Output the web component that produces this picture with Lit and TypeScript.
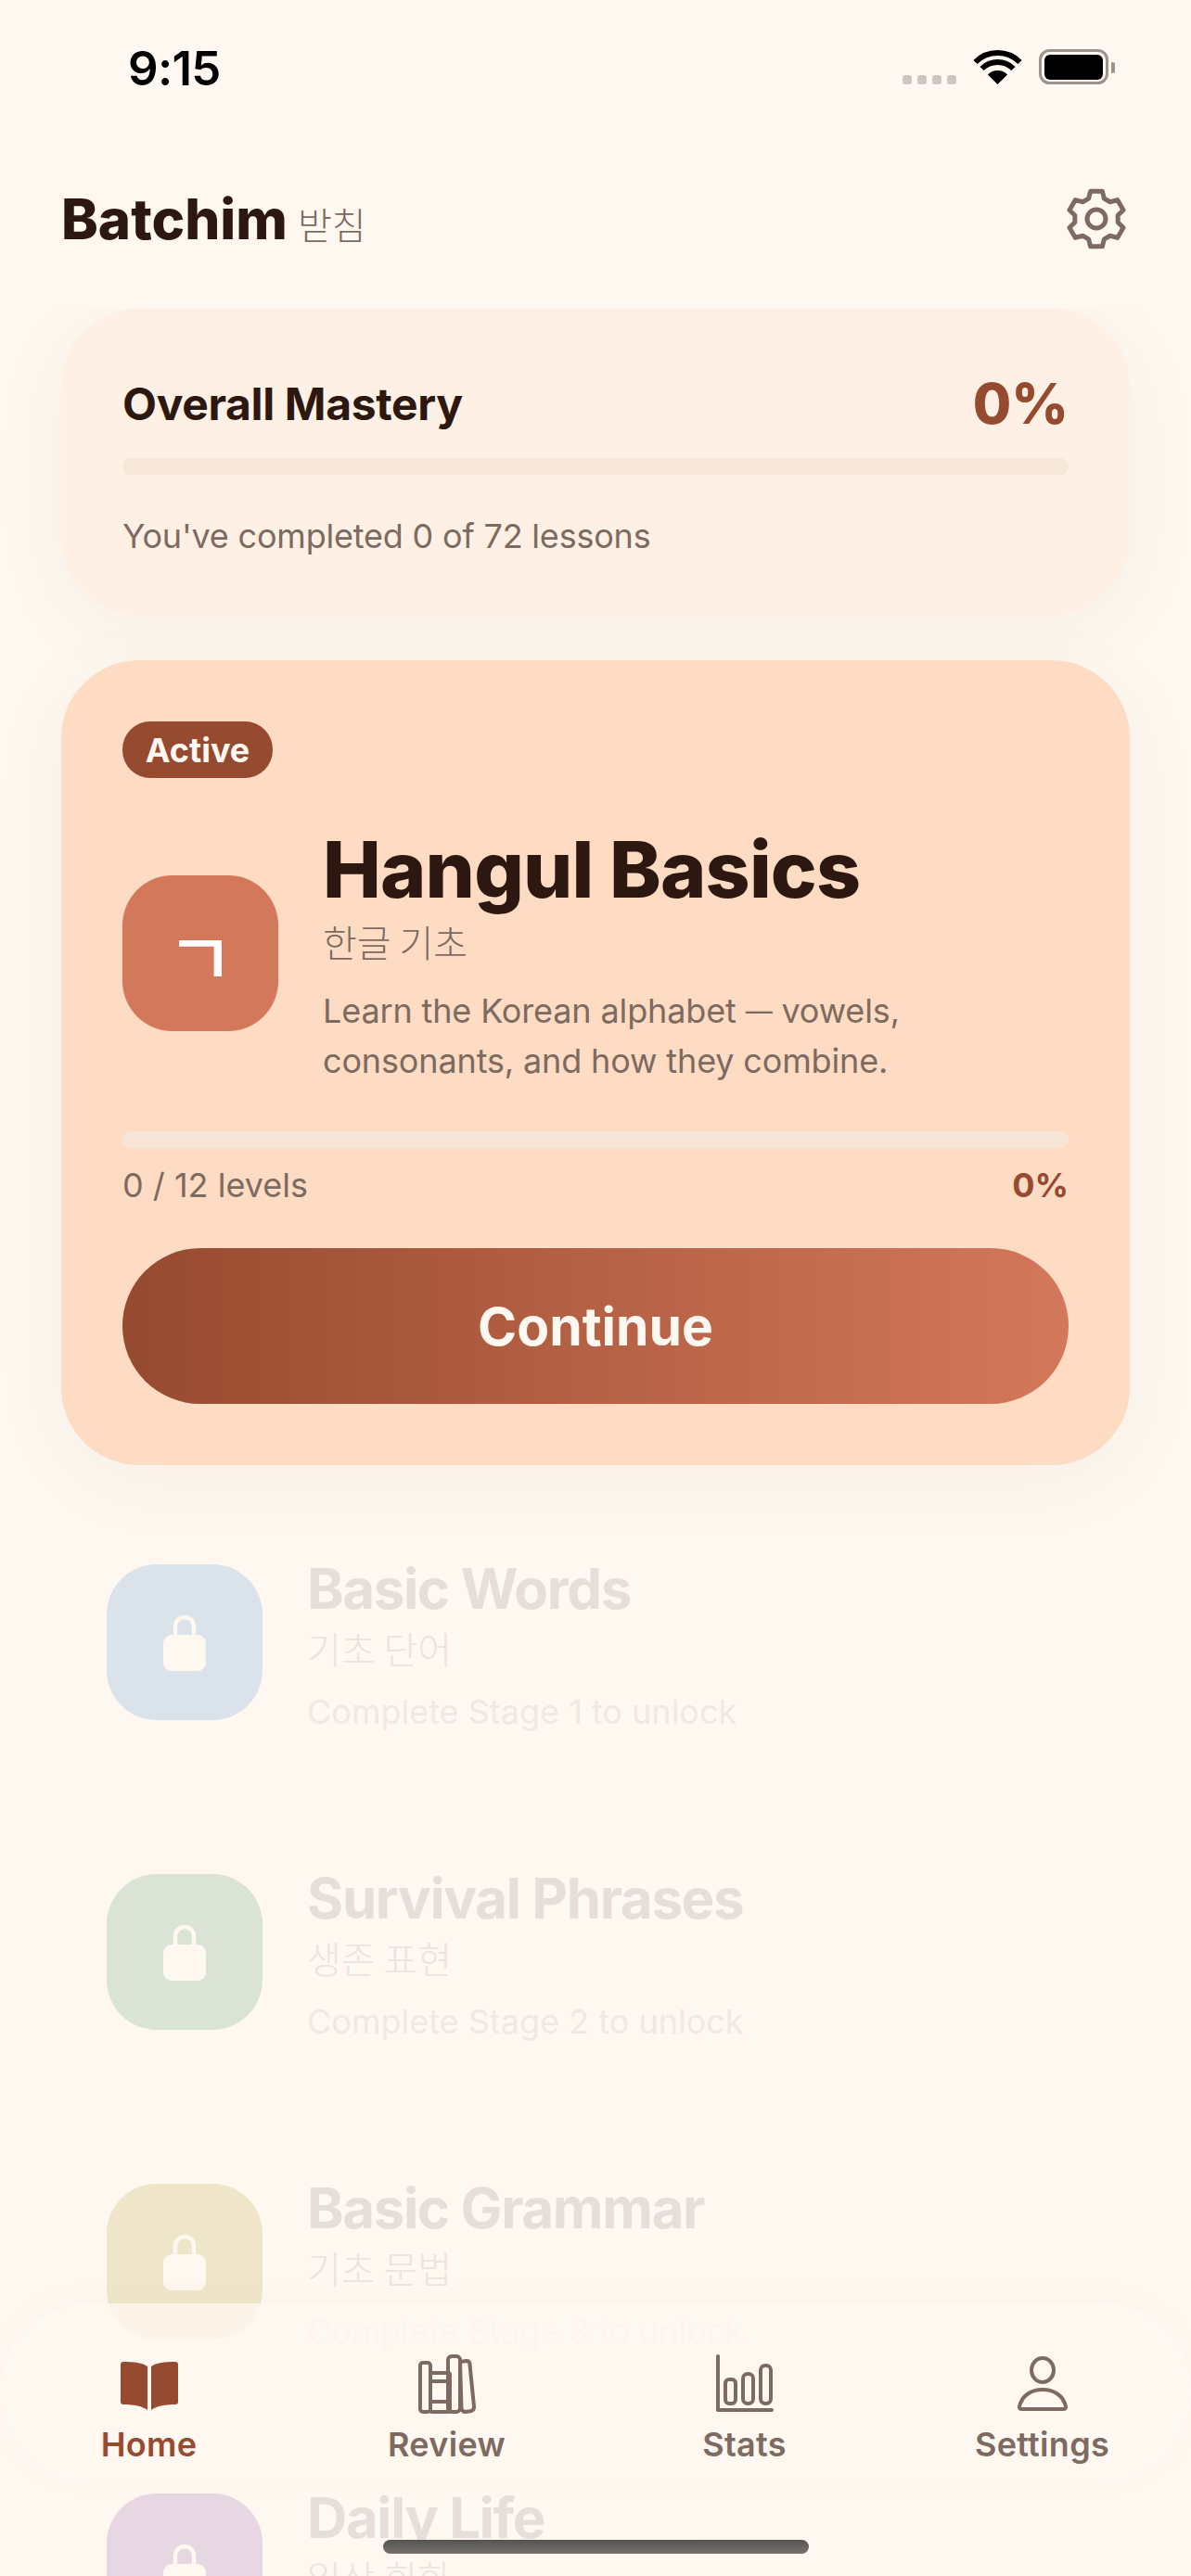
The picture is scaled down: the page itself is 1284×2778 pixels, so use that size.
import { LitElement, html, css } from "lit";
import { customElement } from "lit/decorators.js";

function gearPath(cx: number, cy: number, rO: number, rI: number): string {
  const pts: string[] = [];
  const p = (r: number, a: number) => {
    const t = (a * Math.PI) / 180;
    return `${(cx + r * Math.cos(t)).toFixed(2)} ${(cy + r * Math.sin(t)).toFixed(2)}`;
  };
  for (let i = 0; i < 6; i++) {
    const a = -90 + i * 60;
    pts.push(`${i === 0 ? "M" : "L"}${p(rI, a - 21)}`);
    pts.push(`L${p(rO, a - 12)}`);
    pts.push(`L${p(rO, a + 12)}`);
    pts.push(`L${p(rI, a + 21)}`);
  }
  return pts.join(" ") + " Z";
}

const lockIcon = html`<svg class="lock" viewBox="0 0 46 62" width="46" height="62">
  <path class="shackle" d="M13 26V14a10 10 0 0 1 20 0V26"></path>
  <rect class="lockbody" x="0" y="23" width="46" height="39" rx="9"></rect>
</svg>`;

const locked = [
  { t: "Basic Words", k: "기초 단어", h: "Complete Stage 1 to unlock", c: "blue" },
  { t: "Survival Phrases", k: "생존 표현", h: "Complete Stage 2 to unlock", c: "green" },
  { t: "Basic Grammar", k: "기초 문법", h: "Complete Stage 3 to unlock", c: "yellow" },
  { t: "Daily Life", k: "일상 회화", h: "Complete Stage 4 to unlock", c: "purple" },
];

@customElement("app-root")
export class AppRoot extends LitElement {
  static styles = css`
    :host {
      display: block;
      position: relative;
      width: 1284px;
      height: 2778px;
      overflow: hidden;
      background: #fff8f1;
      font-family: Inter, "Noto Sans CJK KR", sans-serif;
      color: #2c1810;
    }
    .page { display: flex; flex-direction: column; height: 2778px; }
    .status {
      height: 132px;
      flex: none;
      display: flex;
      align-items: flex-start;
      justify-content: space-between;
      padding: 43px 82px 0 138px;
      box-sizing: border-box;
    }
    .time { font-size: 51px; font-weight: 600; line-height: 62px; color: #000; letter-spacing: -0.7px; }
    .sysicons { display: block; margin-top: 10px; }
    .header {
      flex: none;
      height: 201px;
      display: flex;
      align-items: center;
      justify-content: space-between;
      padding: 6px 70px 0 66px;
      box-sizing: border-box;
    }
    .brand { display: flex; align-items: baseline; gap: 11px; }
    .brand b { font-size: 60px; font-weight: 800; letter-spacing: 0; line-height: 72px; }
    .brand span { font-size: 40px; color: #7d6a60; font-weight: 300; font-family: "Noto Sans CJK KR", sans-serif; }
    .gear { display: block; }
    .scroll {
      flex: 1;
      min-height: 0;
      overflow: hidden;
      padding: 0 66px;
      display: flex;
      flex-direction: column;
      gap: 49px;
    }
    .mastery {
      flex: none;
      height: 330px;
      box-sizing: border-box;
      padding: 66px;
      border-radius: 84px;
      background: #fef0e4;
      box-shadow: 0 16px 96px rgba(44, 24, 16, 0.04);
    }
    .m-top { display: flex; justify-content: space-between; align-items: center; height: 62px; margin-top: 5px; }
    .m-title { font-size: 48px; font-weight: 700; letter-spacing: -0.35px; }
    .m-pct { font-size: 60px; font-weight: 800; color: #964a2f; }
    .bar { height: 18px; border-radius: 9px; background: #f6e7d9; }
    .m-top + .bar { margin-top: 28px; }
    .m-sub { font-size: 36px; line-height: 54px; color: #7d6a60; margin-top: 39px; letter-spacing: -0.2px; }
    .active {
      flex: none;
      height: 868px;
      box-sizing: border-box;
      padding: 66px;
      border-radius: 84px;
      background: #fedcc3;
      box-shadow: 0 16px 96px rgba(44, 24, 16, 0.04);
    }
    .pill {
      display: inline-flex;
      align-items: center;
      justify-content: center;
      width: 162px;
      height: 61px;
      border-radius: 30px;
      background: #964a2f;
      color: #fff8f1;
      font-size: 36px;
      font-weight: 700;
      vertical-align: top;
    }
    .a-row { display: flex; align-items: center; gap: 48px; margin-top: 45px; }
    .a-icon {
      width: 168px;
      height: 168px;
      flex: none;
      border-radius: 54px;
      background: #d4785b;
      color: #fff;
      font-size: 80px;
      font-weight: 500;
      display: flex;
      align-items: center;
      justify-content: center;
      font-family: "Noto Sans CJK KR", sans-serif;
    }
    .a-title { font-size: 84px; font-weight: 800; line-height: 108px; letter-spacing: -0.84px; }
    .a-kr { font-size: 40px; font-weight: 300; line-height: 56px; color: #7d6a60; margin-top: -5px; font-family: "Noto Sans CJK KR", sans-serif; }
    .a-desc { font-size: 36px; line-height: 54px; color: #7d6a60; margin: 20px 0 1px; letter-spacing: -0.14px; }
    .dash { font-size: 29px; line-height: 0; vertical-align: 2.5px; }
    .a-row + .bar { margin-top: 48px; background: #f7e6d8; }
    .a-meta { display: flex; justify-content: space-between; align-items: center; height: 54px; margin-top: 13px; font-size: 36px; color: #7d6a60; }
    .a-meta b { color: #964a2f; font-weight: 700; }
    .cta {
      height: 168px;
      margin-top: 41px;
      border-radius: 84px;
      background: linear-gradient(90deg, #964a2f, #d4785b);
      color: #fff8f1;
      font-size: 57px;
      font-weight: 700;
      display: flex;
      align-items: center;
      justify-content: center;
    }
    .rows { display: flex; flex-direction: column; gap: 48px; flex: none; margin-top: -1px; }
    .row {
      flex: none;
      height: 286px;
      box-sizing: border-box;
      padding: 48px 49px;
      display: flex;
      align-items: center;
      gap: 48px;
    }
    .l-icon { width: 168px; height: 168px; flex: none; border-radius: 54px; display: flex; align-items: center; justify-content: center; }
    .l-text { padding-top: 5px; }
    .blue { background: #dbe3ea; }
    .green { background: #d9e4d6; }
    .yellow { background: #efe5c9; }
    .purple { background: #e7d7e2; }
    .shackle { fill: none; stroke: #fff8f1; stroke-width: 4.5; }
    .lockbody { fill: #fff8f1; }
    .lock { display: block; }
    .l-title { font-size: 60px; line-height: 72px; font-weight: 700; letter-spacing: -1.4px; color: #e6deda; }
    .l-kr { font-size: 40px; font-weight: 300; line-height: 56px; color: #ebe3de; font-family: "Noto Sans CJK KR", sans-serif; }
    .l-hint { font-size: 36px; line-height: 54px; color: #efe8e3; margin-top: 14px; margin-bottom: -2px; }
    .tabbar {
      position: absolute;
      left: 0;
      right: 0;
      top: 2484px;
      height: 192px;
      box-sizing: border-box;
      border-radius: 96px;
      background: rgba(255, 248, 241, 0.8);
      box-shadow: 0 -4px 48px rgba(44, 24, 16, 0.02);
      display: grid;
      grid-template-columns: repeat(4, 1fr);
      align-items: start;
    }
    .tab { display: flex; flex-direction: column; align-items: center; padding-top: 55px; color: #7d6a60; }
    .tab.on { color: #964a2f; }
    .tab svg { display: block; height: 66px; }
    .tab span { font-size: 36px; font-weight: 600; line-height: 44px; margin-top: 9px; letter-spacing: 0.3px; }
    .ln { fill: none; stroke: #7d6a60; stroke-width: 4; stroke-linejoin: round; stroke-linecap: round; }
    .home-ind {
      position: absolute;
      left: 413px;
      top: 2739px;
      width: 459px;
      height: 15px;
      border-radius: 8px;
      background: linear-gradient(180deg, #555350, #77736e);
    }
  `;

  render() {
    return html`<div class="page">
        <div class="status">
          <div class="time">9:15</div>
          <svg class="sysicons" width="229" height="38" viewBox="973 53 229 38">
            <g fill="#cbc6c0">
              <rect x="973" y="81" width="10" height="10" rx="3"></rect>
              <rect x="989" y="81" width="10" height="10" rx="3"></rect>
              <rect x="1005" y="81" width="10" height="10" rx="3"></rect>
              <rect x="1021" y="81" width="10" height="10" rx="3"></rect>
            </g>
            <path d="M1064.9 80.4 L1075.5 91 L1086.1 80.4 A15 15 0 0 0 1064.9 80.4 Z" fill="#000"></path>
            <path d="M1058.5 74 A24 24 0 0 1 1092.5 74" fill="none" stroke="#000" stroke-width="6"></path>
            <path d="M1051.5 67 A34 34 0 0 1 1099.5 67" fill="none" stroke="#000" stroke-width="6"></path>
            <rect x="1121.5" y="54.5" width="72" height="35" rx="10" fill="none" stroke="#9b938d" stroke-width="3"></rect>
            <rect x="1126" y="59" width="63" height="27" rx="6" fill="#000"></rect>
            <path d="M1198 67 A7 6 0 0 1 1198 79 Z" fill="#9b938d"></path>
          </svg>
        </div>
        <div class="header">
          <div class="brand"><b>Batchim</b><span>받침</span></div>
          <svg class="gear" width="64" height="66" viewBox="0 0 64 66">
            <path d="${gearPath(32, 33, 30.5, 23.5)}" fill="none" stroke="#7d6a60" stroke-width="5" stroke-linejoin="round"></path>
            <circle cx="32" cy="33" r="10" fill="none" stroke="#7d6a60" stroke-width="5"></circle>
          </svg>
        </div>
        <div class="scroll">
          <section class="mastery">
            <div class="m-top"><div class="m-title">Overall Mastery</div><div class="m-pct">0%</div></div>
            <div class="bar"></div>
            <div class="m-sub">You've completed 0 of 72 lessons</div>
          </section>
          <section class="active">
            <div class="pill">Active</div>
            <div class="a-row">
              <div class="a-icon">ㄱ</div>
              <div>
                <div class="a-title">Hangul Basics</div>
                <div class="a-kr">한글 기초</div>
                <div class="a-desc">Learn the Korean alphabet <span class="dash">—</span> vowels,<br />consonants, and how they combine.</div>
              </div>
            </div>
            <div class="bar"></div>
            <div class="a-meta"><span>0 / 12 levels</span><b>0%</b></div>
            <div class="cta">Continue</div>
          </section>
          <div class="rows">
            ${locked.map(
              (r) => html`<div class="row">
                <div class="l-icon ${r.c}">${lockIcon}</div>
                <div class="l-text">
                  <div class="l-title">${r.t}</div>
                  <div class="l-kr">${r.k}</div>
                  <div class="l-hint">${r.h}</div>
                </div>
              </div>`
            )}
          </div>
        </div>
      </div>
      <nav class="tabbar">
        <div class="tab on">
          <svg width="62" height="66" viewBox="0 0 62 66">
            <path fill="#964a2f" d="M29 13 C24 9 14 8 3 8 Q0 8 0 11 V51 Q0 54 3 54 C14 54 24 56 29 60 Z"></path>
            <path fill="#964a2f" d="M33 13 C38 9 48 8 59 8 Q62 8 62 11 V51 Q62 54 59 54 C48 54 38 56 33 60 Z"></path>
          </svg>
          <span>Home</span>
        </div>
        <div class="tab">
          <svg width="62" height="66" viewBox="0 0 62 66">
            <rect class="ln" x="2" y="9" width="11" height="53" rx="3"></rect>
            <rect class="ln" x="13" y="20" width="21" height="42" rx="2"></rect>
            <path class="ln" d="M13 29H34M13 51H34"></path>
            <rect class="ln" x="32" y="2" width="13" height="60" rx="4"></rect>
            <path class="ln" d="M45 8 L52 7 Q55 7 55.4 10 L60 56 Q60.4 60 57 61 L51 62 Q47 62 46.5 58 Z"></path>
          </svg>
          <span>Review</span>
        </div>
        <div class="tab">
          <svg width="62" height="66" viewBox="0 0 62 66">
            <path class="ln" d="M2 2V60H60"></path>
            <rect class="ln" x="10" y="27" width="11" height="26" rx="4"></rect>
            <rect class="ln" x="29" y="21" width="11" height="32" rx="5"></rect>
            <rect class="ln" x="48" y="12" width="11" height="41" rx="5"></rect>
          </svg>
          <span>Stats</span>
        </div>
        <div class="tab">
          <svg width="56" height="66" viewBox="0 0 56 66">
            <ellipse class="ln" cx="28" cy="17" rx="12" ry="13"></ellipse>
            <path class="ln" d="M3 56 C6 44 16 38 28 38 C40 38 50 44 53 56 Q53.5 59 50 59 H6 Q2.5 59 3 56 Z"></path>
          </svg>
          <span>Settings</span>
        </div>
      </nav>
      <div class="home-ind"></div>`;
  }
}
